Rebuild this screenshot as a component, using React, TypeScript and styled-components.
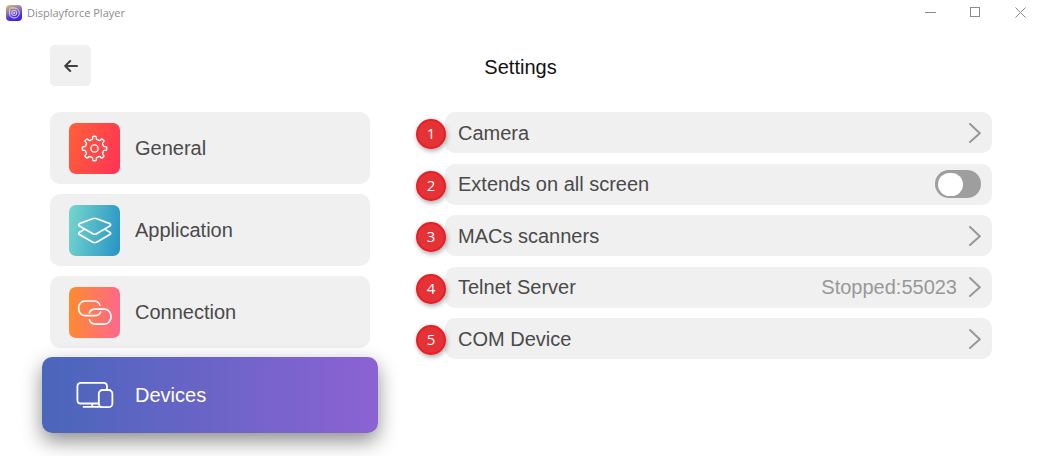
import React, { useState } from "react";
import styled, { createGlobalStyle } from "styled-components";

const GlobalStyle = createGlobalStyle`
  *, *::before, *::after { box-sizing: border-box; }
  body {
    margin: 0;
    background: #fff;
    color: #4a4a4a;
    font-family: "Liberation Sans", Arial, sans-serif;
    font-size: 20px;
    line-height: 24px;
  }
  button { font: inherit; color: inherit; border: 0; padding: 0; background: none; cursor: pointer; }
`;

const TitleBar = styled.div`
  display: flex;
  align-items: center;
  gap: 5px;
  height: 25px;
  padding-left: 6px;
`;

const AppName = styled.span`
  flex: 1;
  color: #8c8c8c;
  font-family: "Open Sans", "Segoe UI", sans-serif;
  font-size: 11px;
  line-height: 16px;
`;

const WindowControls = styled.div`
  display: flex;
  gap: 4px;
`;

const WindowButton = styled.button`
  display: grid;
  place-items: center;
  width: 41px;
  height: 25px;
`;

const Header = styled.header`
  display: grid;
  grid-template-columns: 41px 1fr 41px;
  align-items: center;
  padding: 20px 50px 26px;
`;

const BackButton = styled.button`
  display: grid;
  place-items: center;
  height: 41px;
  border-radius: 5px;
  background: #f0f0f0;
`;

const PageTitle = styled.h1`
  margin: 0;
  color: #111;
  font-size: 20px;
  line-height: 24px;
  padding-top: 2px;
  font-weight: 400;
  text-align: center;
`;

const Content = styled.main`
  display: grid;
  grid-template-columns: 320px 1fr;
  align-items: start;
  gap: 75px;
  padding: 0 49px 24px 50px;
`;

const Sections = styled.nav`
  display: flex;
  flex-direction: column;
  gap: 10px;
`;

const SectionCard = styled.button<{ $active?: boolean }>`
  display: flex;
  align-items: center;
  gap: 15px;
  height: ${(p) => (p.$active ? 76 : 72)}px;
  margin: ${(p) => (p.$active ? "-1px -8px" : "0")};
  padding-left: ${(p) => (p.$active ? 27 : 19)}px;
  border-radius: 10px;
  color: ${(p) => (p.$active ? "#fff" : "#4a4a4a")};
  background: ${(p) => (p.$active ? "linear-gradient(90deg, #4a66bb, #8c62d3)" : "#f0f0f0")};
  box-shadow: ${(p) => (p.$active ? "0 8px 20px rgba(0, 0, 0, 0.45)" : "none")};
`;

const IconTile = styled.span<{ $fill: string }>`
  width: 51px;
  height: 51px;
  border-radius: 7px;
  background: ${(p) => p.$fill};

  svg {
    display: block;
    fill: none;
    stroke: #fff;
    stroke-linecap: round;
    stroke-linejoin: round;
  }
`;

const Options = styled.div`
  display: flex;
  flex-direction: column;
  justify-content: space-between;
  min-height: 247px;
`;

const OptionRow = styled.div`
  position: relative;
  display: flex;
  align-items: center;
  gap: 12px;
  width: 100%;
  height: 41px;
  padding: 0 11px 0 13px;
  border-radius: 10px;
  background: #f0f0f0;
`;

const OptionLabel = styled.span`
  flex: 1;
  text-align: left;
`;

const OptionValue = styled.span`
  color: #989898;
`;

const Badge = styled.span`
  position: absolute;
  left: -29px;
  top: 7px;
  display: grid;
  place-items: center;
  width: 30px;
  height: 30px;
  border: 2px solid #e81e25;
  border-radius: 50%;
  background: #e53237;
  box-shadow: 1px 2px 5px rgba(0, 0, 0, 0.35);
  color: #fff;
  font-family: "Open Sans", sans-serif;
  font-size: 15px;
  line-height: 20px;
  padding-bottom: 2px;
`;

const Toggle = styled.input`
  appearance: none;
  display: flex;
  align-items: center;
  width: 46px;
  height: 28px;
  margin: 0;
  padding: 0 3px;
  border-radius: 14px;
  background: #9e9e9e;
  cursor: pointer;

  &::before {
    content: "";
    width: 25px;
    height: 23px;
    border-radius: 12px;
    background: #fff;
  }

  &:checked {
    justify-content: flex-end;
    background: #6a63c7;
  }
`;

const GEAR_PATH = (() => {
  const point = (radius: number, degrees: number) => {
    const a = (degrees * Math.PI) / 180;
    return `${(25.5 + radius * Math.cos(a)).toFixed(2)} ${(25.5 + radius * Math.sin(a)).toFixed(2)}`;
  };
  let d = "";
  for (let i = 0; i < 8; i++) {
    const c = i * 45 - 90;
    d += `${i ? "L" : "M"}${point(11.3, c - 9)}Q${point(12.4, c - 8)} ${point(12.2, c - 3)}`;
    d += `L${point(12.2, c + 3)}Q${point(12.4, c + 8)} ${point(11.3, c + 9)}`;
    d += `L${point(9.8, c + 11)}Q${point(8.7, c + 16)} ${point(9.4, c + 22.5)}`;
    d += `Q${point(8.7, c + 29)} ${point(9.8, c + 34)}`;
  }
  return d + "Z";
})();

const GearIcon = () => (
  <svg width="51" height="51" viewBox="0 0 51 51" strokeWidth="1.4">
    <path d={GEAR_PATH} />
    <circle cx="25.5" cy="25.5" r="3.6" />
  </svg>
);

const LayersIcon = () => (
  <svg width="51" height="51" viewBox="0 0 51 51" strokeWidth="1.7">
    <path d="M10.4 18.6 23.5 13.7Q25.7 12.8 27.9 13.7L40.8 18.6Q42.4 19.7 40.8 21L28 28.5Q25.7 30 23.4 28.5L10.4 21Q8.9 19.7 10.4 18.6Z" />
    <path d="M14.4 25 10.4 27.2Q8.9 28.3 10.4 29.6L23.4 36.9Q25.7 38.2 28 36.9L40.8 29.6Q42.4 28.3 40.8 27.2L37 25" />
  </svg>
);

const LinkIcon = () => (
  <svg width="51" height="51" viewBox="0 0 51 51" strokeWidth="1.7">
    <path d="M31 18.2C30 15.5 27.8 14 25 14H16.2C12.3 14 9.6 17 9.6 21.2C9.6 25.5 12.3 28.7 16.2 28.7H25C28.3 28.7 30.8 27.2 31.7 25" />
    <path d="M20.4 25.8C21.4 23.5 23.4 22.2 26 22.2H35.3C39.2 22.2 42 25.2 42 29.5C42 34 39.2 37.2 35.3 37.2H26.7C23.6 37.2 21.2 35.7 20.4 32.8" />
  </svg>
);

const DevicesIcon = () => (
  <svg width="51" height="51" viewBox="0 0 51 51" strokeWidth="1.8">
    <path d="M38 19.4V16.4Q38 12.8 34.4 12.8H12Q8.4 12.8 8.4 16.4V29.9Q8.4 33.5 12 33.5H29.8M23.3 33.5V36.8M14.6 36.9H32" />
    <rect x="29.8" y="20" width="13.6" height="17.2" rx="3.8" />
  </svg>
);

const AppLogo = () => (
  <svg width="16" height="16" viewBox="0 0 16 16" fill="none" stroke="#d9d4f5">
    <defs>
      <linearGradient id="logoFill" x1="5" y1="0" x2="11" y2="16" gradientUnits="userSpaceOnUse">
        <stop offset="0" stopColor="#d0b070" />
        <stop offset="0.4" stopColor="#8a72ae" />
        <stop offset="0.7" stopColor="#5136e0" />
        <stop offset="1" stopColor="#3a1be0" />
      </linearGradient>
    </defs>
    <rect width="16" height="16" rx="4" fill="url(#logoFill)" stroke="none" />
    <path d="M3.8 4.2C3.8 3.3 4.4 3 5.2 3H8.3A5 5 0 1 1 3.4 8.6Z" strokeWidth="1" />
    <circle cx="8.2" cy="8" r="2.6" strokeWidth="1" />
    <circle cx="8.2" cy="8" r="0.9" fill="#e8e4fa" stroke="none" />
  </svg>
);

const Chevron = () => (
  <svg width="12" height="20" viewBox="0 0 12 20" fill="none" stroke="#989898" strokeWidth="2" strokeLinecap="round" strokeLinejoin="round">
    <path d="M1 1 10.8 10.2 1 19" />
  </svg>
);

const sections = [
  { name: "General", icon: <GearIcon />, fill: "linear-gradient(110deg, #ff6038, #ff3355)" },
  { name: "Application", icon: <LayersIcon />, fill: "linear-gradient(100deg, #76d7cd, #2693c5)" },
  { name: "Connection", icon: <LinkIcon />, fill: "linear-gradient(95deg, #fc8c2c, #ff6690)" },
  { name: "Devices", icon: <DevicesIcon />, fill: "none" },
];

const options = [
  { name: "Camera" },
  { name: "Extends on all screen", toggle: true },
  { name: "MACs scanners" },
  { name: "Telnet Server", value: "Stopped:55023" },
  { name: "COM Device" },
];

export default function App() {
  const [active, setActive] = useState("Devices");
  const [extended, setExtended] = useState(false);

  return (
    <>
      <GlobalStyle />
      <TitleBar>
        <AppLogo />
        <AppName>Displayforce Player</AppName>
        <WindowControls>
          <WindowButton aria-label="Minimize">
            <svg width="11" height="11" stroke="#8a8a8a"><path d="M0 5.5H11" /></svg>
          </WindowButton>
          <WindowButton aria-label="Maximize">
            <svg width="11" height="11" stroke="#8a8a8a" fill="none"><rect x="0.5" y="0.5" width="9" height="9" /></svg>
          </WindowButton>
          <WindowButton aria-label="Close">
            <svg width="11" height="11" stroke="#8a8a8a"><path d="M0.5 0.5 10.5 10.5M10.5 0.5 0.5 10.5" /></svg>
          </WindowButton>
        </WindowControls>
      </TitleBar>

      <Header>
        <BackButton aria-label="Back">
          <svg width="14" height="12" viewBox="0 0 14 12" fill="none" stroke="#404040" strokeWidth="2" strokeLinecap="round" strokeLinejoin="round">
            <path d="M6.2 1 1.2 6 6.2 11M1.2 6H13" />
          </svg>
        </BackButton>
        <PageTitle>Settings</PageTitle>
      </Header>

      <Content>
        <Sections>
          {sections.map(({ name, icon, fill }) => (
            <SectionCard key={name} $active={name === active} onClick={() => setActive(name)}>
              <IconTile $fill={fill}>{icon}</IconTile>
              {name}
            </SectionCard>
          ))}
        </Sections>

        <Options>
          {options.map(({ name, value, toggle }, index) => (
            <OptionRow key={name} as={toggle ? "label" : "button"}>
              <Badge>{index + 1}</Badge>
              <OptionLabel>{name}</OptionLabel>
              {value && <OptionValue>{value}</OptionValue>}
              {toggle ? (
                <Toggle type="checkbox" checked={extended} onChange={(e) => setExtended(e.target.checked)} />
              ) : (
                <Chevron />
              )}
            </OptionRow>
          ))}
        </Options>
      </Content>
    </>
  );
}
